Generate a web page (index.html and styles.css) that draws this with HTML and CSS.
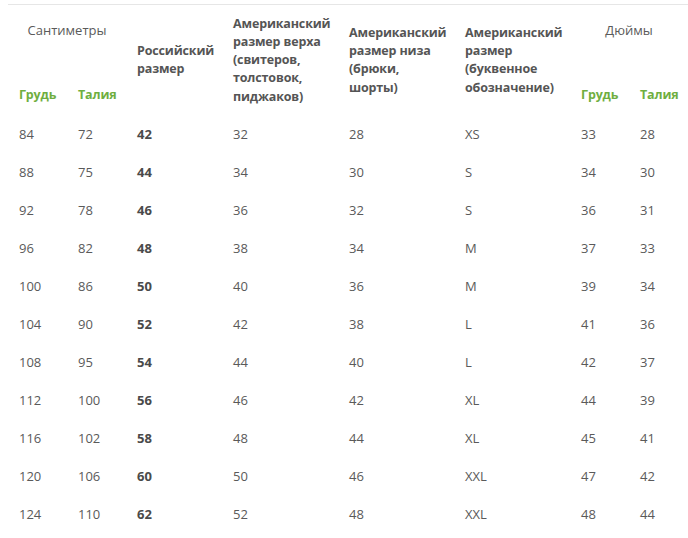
FILE: index.html
```html
<!DOCTYPE html>
<html lang="ru">
<head>
<meta charset="utf-8">
<title>Таблица размеров</title>
<link rel="stylesheet" href="styles.css">
</head>
<body>
<table class="sizes">
  <colgroup>
    <col class="c-narrow"><col class="c-narrow"><col class="c-ru"><col class="c-wide"><col class="c-wide"><col class="c-wide"><col class="c-narrow"><col class="c-narrow">
  </colgroup>
  <thead>
    <tr class="h1">
      <th colspan="2" class="group">Сантиметры</th>
      <th rowspan="2" class="title">Российский размер</th>
      <th rowspan="2" class="title">Американский размер верха (свитеров, толстовок, пиджаков)</th>
      <th rowspan="2" class="title">Американский размер низа (брюки, шорты)</th>
      <th rowspan="2" class="title">Американский размер (буквенное обозначение)</th>
      <th colspan="2" class="group">Дюймы</th>
    </tr>
    <tr class="h2">
      <th class="sub">Грудь</th>
      <th class="sub">Талия</th>
      <th class="sub">Грудь</th>
      <th class="sub">Талия</th>
    </tr>
  </thead>
  <tbody>
    <tr><td>84</td><td>72</td><td class="ru">42</td><td>32</td><td>28</td><td>XS</td><td>33</td><td>28</td></tr>
    <tr><td>88</td><td>75</td><td class="ru">44</td><td>34</td><td>30</td><td>S</td><td>34</td><td>30</td></tr>
    <tr><td>92</td><td>78</td><td class="ru">46</td><td>36</td><td>32</td><td>S</td><td>36</td><td>31</td></tr>
    <tr><td>96</td><td>82</td><td class="ru">48</td><td>38</td><td>34</td><td>M</td><td>37</td><td>33</td></tr>
    <tr><td>100</td><td>86</td><td class="ru">50</td><td>40</td><td>36</td><td>M</td><td>39</td><td>34</td></tr>
    <tr><td>104</td><td>90</td><td class="ru">52</td><td>42</td><td>38</td><td>L</td><td>41</td><td>36</td></tr>
    <tr><td>108</td><td>95</td><td class="ru">54</td><td>44</td><td>40</td><td>L</td><td>42</td><td>37</td></tr>
    <tr><td>112</td><td>100</td><td class="ru">56</td><td>46</td><td>42</td><td>XL</td><td>44</td><td>39</td></tr>
    <tr><td>116</td><td>102</td><td class="ru">58</td><td>48</td><td>44</td><td>XL</td><td>45</td><td>41</td></tr>
    <tr><td>120</td><td>106</td><td class="ru">60</td><td>50</td><td>46</td><td>XXL</td><td>47</td><td>42</td></tr>
    <tr><td>124</td><td>110</td><td class="ru">62</td><td>52</td><td>48</td><td>XXL</td><td>48</td><td>44</td></tr>
  </tbody>
</table>
</body>
</html>
```

FILE: styles.css
```css
html, body {
  background: #ffffff;
}
body {
  margin: 4px 0 0 8px;
  font-family: "Open Sans", "Liberation Sans", sans-serif;
  font-size: 13px;
  line-height: 18.3px;
  color: #555555;
}
.sizes {
  border-collapse: collapse;
  table-layout: fixed;
  width: 680px;
  border-top: 1px solid #e6e6e6;
}
.c-narrow { width: 59px; }
.c-ru { width: 96px; }
.c-wide { width: 116px; }
.sizes th,
.sizes td {
  padding: 0 11px;
  text-align: left;
}
.h1 { height: 50px; }
.h2 { height: 61px; }
.group {
  font-weight: normal;
  text-align: center !important;
  vertical-align: middle;
  color: #5a5a5a;
}
.title {
  font-weight: bold;
  font-size: 12.5px;
  letter-spacing: -0.15px;
  vertical-align: middle;
  color: #555555;
}
.sub {
  font-weight: bold;
  font-size: 12.5px;
  letter-spacing: -0.15px;
  color: #6fae40;
  vertical-align: bottom;
  padding-bottom: 11px !important;
}
.sizes tbody tr {
  height: 38px;
}
.sizes td {
  vertical-align: middle;
  color: #5a5a5a;
}
.sizes td.ru {
  font-weight: bold;
  color: #4a4a4a;
}
```
